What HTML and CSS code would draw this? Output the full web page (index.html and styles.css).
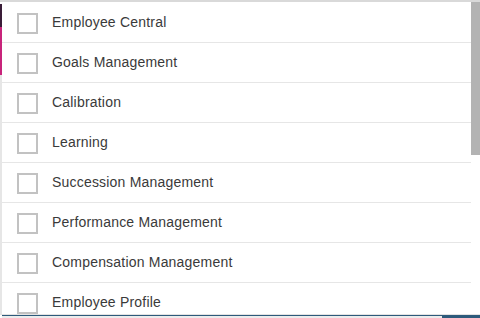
FILE: index.html
```html
<!DOCTYPE html>
<html>
<head>
<meta charset="utf-8">
<link rel="stylesheet" href="styles.css">
</head>
<body>
<div class="page">
  <div class="popup">
    <div class="strip"></div>
    <ul class="list">
      <li class="row"><span class="box"></span><span class="label">Employee Central</span></li>
      <li class="row"><span class="box"></span><span class="label">Goals Management</span></li>
      <li class="row"><span class="box"></span><span class="label">Calibration</span></li>
      <li class="row"><span class="box"></span><span class="label">Learning</span></li>
      <li class="row"><span class="box"></span><span class="label">Succession Management</span></li>
      <li class="row"><span class="box"></span><span class="label">Performance Management</span></li>
      <li class="row"><span class="box"></span><span class="label">Compensation Management</span></li>
      <li class="row"><span class="box"></span><span class="label">Employee Profile</span></li>
    </ul>
    <div class="track"><div class="thumb"></div></div>
  </div>
  <div class="footer">
    <div class="footer-left"></div>
    <div class="footer-right"></div>
  </div>
</div>
</body>
</html>
```

FILE: styles.css
```css
html, body {
  margin: 0;
  padding: 0;
  background: #ffffff;
  overflow: hidden;
}
.page {
  width: 480px;
  height: 318px;
  display: flex;
  flex-direction: column;
  font-family: "Liberation Sans", Arial, sans-serif;
}
.popup {
  height: 312px;
  border-top: 2px solid #d9d9d9;
  border-bottom: 1px solid #e3e3e3;
  display: flex;
  overflow: hidden;
  flex: none;
}
.strip {
  width: 2px;
  flex: none;
  background: linear-gradient(to bottom, #ffffff 0, #ffffff 2px, #3a1d38 2px, #3a1d38 25px, #c8247b 25px, #c8247b 73px, #e6e6e6 73px);
}
.list {
  list-style: none;
  margin: 0;
  padding: 1px 0 0 0;
  width: 469px;
  flex: none;
}
.row {
  height: 39px;
  border-bottom: 1px solid #e6e6e6;
  display: flex;
  align-items: center;
  padding-left: 15px;
}
.box {
  width: 17px;
  height: 17px;
  border: 2px solid #c2c2c2;
  flex: none;
  margin-top: 1px;
}
.label {
  margin-left: 14px;
  margin-bottom: 2px;
  font-size: 14px;
  letter-spacing: 0.2px;
  color: #3a3a3a;
}
.track {
  width: 9px;
  flex: none;
  background: #ffffff;
}
.thumb {
  height: 153px;
  background: #b3b3b3;
}
.footer {
  height: 3px;
  display: flex;
}
.footer-left {
  flex: 1;
  margin-left: 2px;
  border-top: 1px solid #2d5a7b;
  background: #ececec;
}
.footer-right {
  width: 38px;
  background: #2d5a7b;
}
```
